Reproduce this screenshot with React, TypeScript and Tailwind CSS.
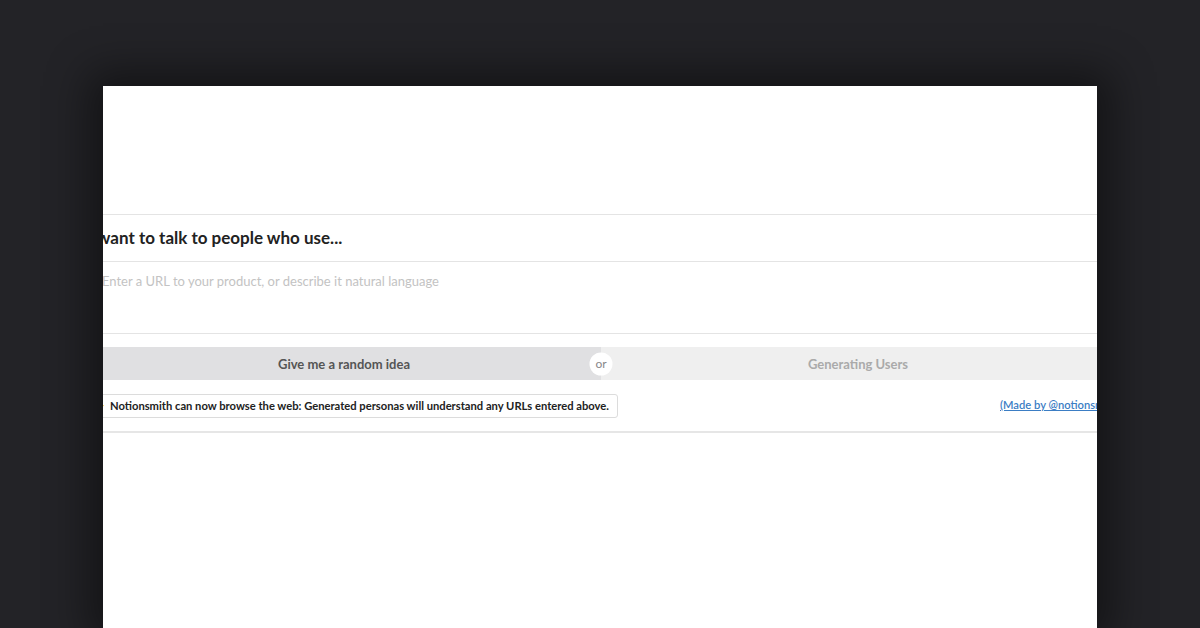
import React from "react";

export default function App() {
  return (
    <div
      className="w-[1200px] h-[628px] bg-[#232327] overflow-hidden flex justify-center pt-[86px]"
      style={{ fontFamily: "Lato, 'Open Sans', sans-serif" }}
    >
      <div className="w-[994px] h-[542px] bg-white overflow-hidden shadow-[0_0_40px_14px_rgba(0,0,0,0.45)]">
        <div className="w-[1028px] ml-[-16px] flex flex-col">
          <div className="h-[128px]" />
          <div className="border-t border-[#e4e4e4] h-[47px] flex items-center pl-[1px]">
            <span className="text-[17px] font-bold text-[#222]">I want to talk to people who use...</span>
          </div>
          <div className="border-t border-[#e4e4e4] h-[72px] pt-[6px] pl-[15px]">
            <span className="text-[13px] text-[#c3c3c3]">Enter a URL to your product, or describe it natural language</span>
          </div>
          <div className="border-t border-[#e4e4e4] pt-[13px]">
            <div className="relative flex h-[33px]">
              <div className="flex-1 bg-[#e0e0e2] flex items-center justify-center pt-[2px] text-[13px] font-bold text-[#555]">
                Give me a random idea
              </div>
              <div className="flex-1 bg-[#efefef] flex items-center justify-center pt-[2px] text-[13px] font-bold text-[#aaa]">
                Generating Users
              </div>
              <div className="absolute left-1/2 top-1/2 -translate-x-1/2 -translate-y-1/2 w-[23px] h-[23px] rounded-full bg-white flex items-center justify-center text-[12px] text-[#888]">
                or
              </div>
            </div>
          </div>
          <div className="flex items-center h-[24px] mt-[14px]">
            <div className="h-[24px] flex items-center gap-[5px] border border-[#dcdcdc] rounded-[3px] pl-[7px] pr-[8px]">
              <svg width="10" height="12" viewBox="0 0 10 12">
                <path d="M6 0 L1 7 H5 L4 12 L9 5 H5 Z" fill="#f2c230" />
              </svg>
              <span className="text-[11.2px] font-bold text-[#222]">
                Notionsmith can now browse the web: Generated personas will understand any URLs entered above.
              </span>
            </div>
            <div className="ml-auto w-[115px] h-[24px] flex items-center whitespace-nowrap leading-none pb-[3px]">
              <a href="#" className="text-[11.2px] font-semibold text-[#3b7dc4] underline">
                (Made by @notionsmith)
              </a>
            </div>
          </div>
          <div className="mt-[13px] border-t-2 border-[#e6e6e6]" />
        </div>
      </div>
    </div>
  );
}
